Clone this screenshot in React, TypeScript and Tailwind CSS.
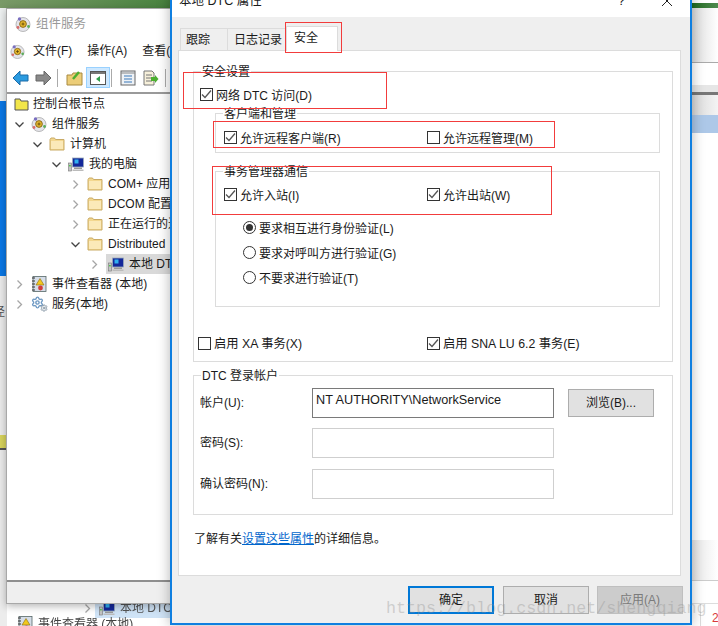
import type { ReactNode } from "react";
import { Settings } from "lucide-react";

const FONT = "font-['Liberation_Sans','Noto_Sans_CJK_SC',sans-serif]";

const Check = ({ on }: { on?: boolean }) => (
  <span className="flex h-[13px] w-[13px] shrink-0 items-center justify-center border border-[#333] bg-white">
    {on && (
      <svg width="11" height="11" viewBox="0 0 11 11" fill="none" stroke="#555" strokeWidth="1.3">
        <path d="M1 5.5 4 8.5 10 1.5" />
      </svg>
    )}
  </span>
);

const Radio = ({ on, text }: { on?: boolean; text: string }) => (
  <div className="flex h-[13px] items-center gap-[3px] whitespace-nowrap">
    <span className="flex h-[13px] w-[13px] shrink-0 items-center justify-center rounded-full border border-[#333] bg-white">
      {on && <span className="h-[7px] w-[7px] rounded-full bg-[#333]" />}
    </span>
    <span className="pt-[2px]">{text}</span>
  </div>
);

const CheckRow = ({ on, text }: { on?: boolean; text: string }) => (
  <div className="flex h-[13px] items-center gap-[3px] whitespace-nowrap">
    <Check on={on} />
    <span className="pt-[2px]">{text}</span>
  </div>
);

const Folder = () => (
  <svg width="16" height="14" viewBox="0 0 16 14" className="shrink-0">
    <path d="M1 13V2.5L2 1h3.5l1 1.5H15V13z" fill="#f3d78f" stroke="#c9ab66" strokeWidth="1" />
    <path d="M2 4h12v8H2z" fill="#fbe9b8" />
  </svg>
);

const Computer = () => (
  <svg width="16" height="15" viewBox="0 0 16 15" className="shrink-0">
    <rect x="0.5" y="6" width="3" height="8" fill="#c4c4c4" stroke="#777" strokeWidth="0.6" />
    <rect x="1.2" y="8" width="1.4" height="1.4" fill="#3c3" />
    <rect x="4.5" y="1" width="11" height="9" fill="#14289a" stroke="#9ab" strokeWidth="0.8" />
    <rect x="6.5" y="2.5" width="4" height="4" fill="#2fb0f0" />
    <rect x="6" y="10.5" width="8" height="1.5" fill="#999" />
    <rect x="4.5" y="12.5" width="11" height="1.5" fill="#bbb" />
  </svg>
);

const ComponentIcon = ({ size = 16 }: { size?: number }) => (
  <svg width={size} height={size} viewBox="0 0 16 16" className="shrink-0">
    <circle cx="8" cy="8.5" r="7" fill="#e4e4ea" stroke="#aaa" strokeWidth="0.8" />
    <circle cx="8" cy="8" r="3.4" fill="#e3b52c" stroke="#7a5a10" strokeWidth="0.8" />
    <path d="M6.5 8h3M8 6.5v3" stroke="#5a4208" strokeWidth="0.8" />
    <circle cx="4.5" cy="3" r="1.7" fill="#7a6fc0" />
    <circle cx="13.5" cy="10.5" r="1.4" fill="#5cae5c" />
    <circle cx="3" cy="11.5" r="1.4" fill="#d86a6a" />
  </svg>
);

const EventIcon = () => (
  <svg width="16" height="16" viewBox="0 0 16 16" className="shrink-0">
    <rect x="2" y="0.5" width="13" height="15" fill="#d5dde8" stroke="#566" strokeWidth="0.8" />
    <path d="M1 2h3M1 5h3M1 8h3M1 11h3M1 14h3" stroke="#333" strokeWidth="1" />
    <path d="M9 2.5 13 9H5z" fill="#f2c81e" stroke="#8a6a10" strokeWidth="0.6" />
    <circle cx="9.5" cy="12" r="2.4" fill="#d23c3c" />
  </svg>
);

const ServiceIcon = () => (
  <span className="relative h-4 w-4 shrink-0">
    <Settings size={13} color="#6f9ac4" strokeWidth={2.6} />
    <span className="absolute bottom-0 right-[-1px]">
      <Settings size={8} color="#8a9aa8" strokeWidth={3} />
    </span>
  </span>
);

const Chevron = ({ open }: { open?: boolean }) => (
  <svg width="9" height="9" viewBox="0 0 9 9" fill="none" strokeWidth="1.3" stroke={open ? "#444" : "#a6a6a6"} className="shrink-0">
    {open ? <path d="M0.5 2.5 4.5 6.5 8.5 2.5" /> : <path d="M2.5 0.5 6.5 4.5 2.5 8.5" />}
  </svg>
);

const Tree = ({ indent, open, icon, label, selected }: { indent: string; open?: boolean; icon: ReactNode; label: string; selected?: boolean }) => (
  <div className={`flex h-5 items-center whitespace-nowrap ${indent}`}>
    <Chevron open={open} />
    <span className={`ml-[7px] flex h-5 grow items-center ${selected ? "ml-[5px] bg-[#d9d9d9] pl-[2px]" : ""}`}>
      {icon}
      <span className="ml-[5px]">{label}</span>
    </span>
  </div>
);

const Group = ({ title, className, children }: { title: string; className: string; children?: ReactNode }) => (
  <div className={`relative border border-[#dcdcdc] ${className}`}>
    <span className="absolute left-[7px] top-[-8px] whitespace-nowrap bg-white px-[1px] leading-4">{title}</span>
    {children}
  </div>
);

const Btn = ({ text, className }: { text: string; className: string }) => (
  <div className={`flex h-[28px] w-[86px] shrink-0 items-center justify-center ${className}`}>{text}</div>
);

const Highlight = ({ className }: { className: string }) => (
  <div className={`pointer-events-none absolute z-30 border border-[#f23c3c] ${className}`} />
);

const AccountRow = ({ label, value, focus, className = "", children }: { label: string; value?: string; focus?: boolean; className?: string; children?: ReactNode }) => (
  <div className={`flex h-[30px] items-center ${className}`}>
    <span className="w-[112px] shrink-0 whitespace-nowrap">{label}</span>
    <div className={`h-[30px] w-[242px] shrink-0 whitespace-nowrap border pl-[3px] pt-[2px] text-[12.7px] leading-[18px] ${focus ? "border-[#7a7a7a]" : "border-[#cfcfcf]"}`}>{value}</div>
    {children}
  </div>
);

export default function App() {
  return (
    <div className={`relative h-[626px] w-[718px] overflow-hidden bg-white text-[12px] text-[#1a1a1a] ${FONT}`}>
      {/* desktop behind the windows */}
      <div className="absolute left-0 top-0 h-[8px] w-[200px] bg-gradient-to-r from-[#7a9a68] to-[#3f7f38]" />
      <div className="absolute left-0 top-[8px] h-[93px] w-[7px] bg-[#eef1f1]" />
      <div className="absolute left-0 top-[101px] h-[175px] w-[7px] bg-[#0a78e6]" />
      <div className="absolute left-0 top-[276px] h-[350px] w-[7px] bg-[#ececec]" />
      <span className="absolute left-[-7px] top-[303px] text-[#555]">径</span>
      <div className="absolute left-0 top-[435px] h-[13px] w-[7px] bg-[#d8d45c]" />
      <div className="absolute left-0 top-[448px] h-[2px] w-[7px] bg-[#555]" />

      <div className="absolute right-0 top-[3px] h-[5px] w-[26px] bg-gradient-to-r from-[#1f6b1f] to-[#4f8a4f]" />
      <div className="absolute right-0 top-[8px] h-[54px] w-[26px] bg-gradient-to-r from-[#dcdcdc] to-white" />
      <div className="absolute right-0 top-[62px] h-px w-[26px] bg-[#aaa]" />
      <div className="absolute right-0 top-[85px] h-[7px] w-[26px] bg-[#e6e6e6]" />
      <div className="absolute right-0 top-[92px] h-[3px] w-[26px] bg-[#777]" />
      <div className="absolute right-0 top-[95px] h-[20px] w-[26px] bg-gradient-to-r from-[#d8d8d8] to-[#f4f4f4]" />
      <div className="absolute right-0 top-[115px] h-[18px] w-[26px] bg-[#adc8e8]" />
      <div className="absolute right-0 top-[540px] h-[40px] w-[26px] bg-gradient-to-r from-[#e6e6e6] to-white" />
      <div className="absolute right-0 top-[580px] h-px w-[26px] bg-[#ccc]" />
      <div className="absolute right-0 top-[603px] h-px w-[26px] bg-[#ddd]" />
      <div className="absolute left-[700px] top-[603px] h-[23px] w-px bg-[#ddd]" />
      <span className="absolute left-[712px] top-[609px] text-[#d83a3a]">2</span>

      {/* tree rows of the window behind */}
      <div className="absolute left-[83px] top-[598px] flex h-[20px] items-center blur-[0.5px]">
        <Chevron />
        <div className="ml-[3px] flex h-[20px] w-[80px] items-center gap-[5px] whitespace-nowrap bg-[#cfe3f6] pl-[4px] text-[#555]">
          <Computer />
          <span>本地 DTC</span>
        </div>
      </div>
      <div className="absolute left-[17px] top-[615px] flex items-center gap-[5px] whitespace-nowrap text-[#444] blur-[0.4px]">
        <EventIcon />
        <span>事件查看器 (本地)</span>
      </div>

      {/* MMC window */}
      <div className="absolute left-[6px] top-[8px] flex h-[596px] w-[170px] flex-col overflow-hidden border border-[#a8a8a8] bg-white shadow-[0_2px_8px_rgba(0,0,0,0.3)]">
        <div className="flex h-[30px] shrink-0 items-center pl-[8px] text-[#9a9a9a]">
          <ComponentIcon />
          <span className="ml-[5px] text-[12.5px]">组件服务</span>
        </div>
        <div className="flex h-[24px] shrink-0 items-center whitespace-nowrap pl-[3px]">
          <ComponentIcon size={15} />
          <span className="ml-[8px]">文件(F)</span>
          <span className="ml-[15px]">操作(A)</span>
          <span className="ml-[15px]">查看(V)</span>
        </div>
        <div className="flex h-[31px] shrink-0 items-center border-b-2 border-[#9a9a9a] pl-[5px]">
          <svg width="17" height="16" viewBox="0 0 17 16" className="shrink-0"><path d="M1 8 8 1v4h8v6H8v4z" fill="#2b9be0" stroke="#1a6aa8" /></svg>
          <svg width="17" height="16" viewBox="0 0 17 16" className="ml-[6px] shrink-0"><path d="M16 8 9 1v4H1v6h8v4z" fill="#8a8a8a" stroke="#666" /></svg>
          <span className="ml-[5px] h-[18px] w-px bg-[#aaa]" />
          <svg width="17" height="16" viewBox="0 0 17 16" className="ml-[8px] shrink-0"><path d="M1 15V5h5l1-2h9v12z" fill="#eccd78" stroke="#a88a40" /><path d="M7 9 13 2" stroke="#4caf30" strokeWidth="2.5" /></svg>
          <span className="ml-[3px] flex h-[21px] w-[24px] items-center justify-center border border-[#99d1ff] bg-[#cde8ff]">
            <svg width="16" height="14" viewBox="0 0 16 14"><rect x="0.5" y="0.5" width="15" height="13" fill="#fff" stroke="#555" /><path d="M1 1h14v2H1z" fill="#777" /><path d="M10 5v6L6 8z" fill="#2e9e4a" /></svg>
          </span>
          <span className="ml-px h-[18px] w-px bg-[#aaa]" />
          <svg width="16" height="16" viewBox="0 0 16 16" fill="none" className="ml-[8px] shrink-0"><rect x="1" y="1" width="14" height="14" fill="#eef2f6" stroke="#666" /><path d="M1 3h14" stroke="#888" /><path d="M4 6h8M4 9h8M4 12h8" stroke="#3a78b8" /></svg>
          <svg width="16" height="16" viewBox="0 0 16 16" fill="none" className="ml-[7px] shrink-0"><path d="M1 1h8l2 2v12H1z" fill="#f7f0da" stroke="#777" /><path d="M3 5h6M3 8h6M3 11h6" stroke="#777" /><path d="M8 7h4V5l3.5 4-3.5 4v-2H8z" fill="#4caf30" /></svg>
          <span className="ml-[6px] h-[18px] w-px bg-[#aaa]" />
        </div>
        <div className="grow overflow-hidden">
          <div className="flex h-5 items-center pl-[7px]">
            <svg width="15" height="13" viewBox="0 0 15 13" className="shrink-0"><path d="M1 12V1h5l1 2h7v9z" fill="#f2e64a" stroke="#555" /></svg>
            <span className="ml-[4px]">控制台根节点</span>
          </div>
          <Tree indent="pl-[8px]" open icon={<ComponentIcon />} label="组件服务" />
          <Tree indent="pl-[26px]" open icon={<Folder />} label="计算机" />
          <Tree indent="pl-[45px]" open icon={<Computer />} label="我的电脑" />
          <Tree indent="pl-[64px]" icon={<Folder />} label="COM+ 应用程序" />
          <Tree indent="pl-[64px]" icon={<Folder />} label="DCOM 配置" />
          <Tree indent="pl-[64px]" icon={<Folder />} label="正在运行的进程" />
          <Tree indent="pl-[64px]" open icon={<Folder />} label="Distributed" />
          <Tree indent="pl-[83px]" selected icon={<Computer />} label="本地 DTC" />
          <Tree indent="pl-[8px]" icon={<EventIcon />} label="事件查看器 (本地)" />
          <Tree indent="pl-[8px]" icon={<ServiceIcon />} label="服务(本地)" />
        </div>
        <div className="h-[23px] shrink-0 border-t-2 border-[#8f8f8f] bg-[#efefef]" />
      </div>

      {/* properties dialog */}
      <div className="absolute left-[170px] top-[-17px] z-10 flex h-[642px] w-[522px] flex-col border-2 border-[#0f7fe0] bg-[#efefef] shadow-[0_0_12px_rgba(0,0,0,0.3)]">
        <div className="flex h-[32px] shrink-0 items-center bg-white pl-[7px] pr-[17px]">
          <span className="whitespace-nowrap text-[12.5px]">本地 DTC 属性</span>
          <span className="ml-auto text-[13px]">?</span>
          <svg width="12" height="12" viewBox="0 0 12 12" fill="none" stroke="#222" strokeWidth="1" className="ml-[36px]"><path d="M1 1l10 10M11 1 1 11" /></svg>
        </div>
        <div className="flex h-[33px] shrink-0 items-end pl-[8px]">
          <div className="flex h-[22px] w-[48px] items-center border border-b-0 border-[#dcdcdc] pl-[5px]">跟踪</div>
          <div className="flex h-[22px] w-[58px] items-center whitespace-nowrap border-r border-t border-[#dcdcdc] pl-[6px]">日志记录</div>
          <div className="relative z-10 mb-[-1px] flex h-[25px] w-[52px] items-center border border-b-0 border-[#dcdcdc] bg-white pb-[2px] pl-[7px]">安全</div>
        </div>
        <div className="ml-[6px] h-[526px] w-[503px] shrink-0 border border-[#dcdcdc] bg-white">
          <Group title="安全设置" className="ml-[14px] mt-[20px] h-[291px] w-[480px]">
            <div className="pl-[6px] pt-[16px]">
              <CheckRow on text="网络 DTC 访问(D)" />
            </div>
            <Group title="客户端和管理" className="ml-[21px] mt-[12px] h-[40px] w-[445px]">
              <div className="grid grid-cols-[203px_1fr] pl-[8px] pt-[17px]">
                <CheckRow on text="允许远程客户端(R)" />
                <CheckRow text="允许远程管理(M)" />
              </div>
            </Group>
            <Group title="事务管理器通信" className="ml-[21px] mt-[18px] h-[136px] w-[445px]">
              <div className="grid grid-cols-[203px_1fr] pl-[8px] pt-[16px]">
                <CheckRow on text="允许入站(I)" />
                <CheckRow on text="允许出站(W)" />
              </div>
              <div className="mt-5 flex flex-col gap-3 pl-[27px]">
                <Radio on text="要求相互进行身份验证(L)" />
                <Radio text="要求对呼叫方进行验证(G)" />
                <Radio text="不要求进行验证(T)" />
              </div>
            </Group>
            <div className="mt-[30px] grid grid-cols-[229px_1fr] pl-1 text-[12.3px]">
              <CheckRow text="启用 XA 事务(X)" />
              <CheckRow on text="启用 SNA LU 6.2 事务(E)" />
            </div>
          </Group>
          <Group title="DTC 登录帐户" className="ml-[14px] mt-[13px] h-[140px] w-[480px]">
            <div className="pl-[6px] pt-[12px]">
              <AccountRow label="帐户(U):" value="NT AUTHORITY\NetworkService" focus>
                <Btn text="浏览(B)..." className="ml-[14px] border border-[#adadad] bg-[#e1e1e1]" />
              </AccountRow>
              <AccountRow label="密码(S):" className="mt-[10px]" />
              <AccountRow label="确认密码(N):" className="mt-[11px]" />
            </div>
          </Group>
          <p className="ml-[15px] mt-[16px] whitespace-nowrap leading-4">
            了解有关<span className="text-[#0066cc] underline">设置这些属性</span>的详细信息。
          </p>
        </div>
        <div className="mt-[10px] flex justify-end pr-[7px]">
          <Btn text="确定" className="border-2 border-[#0078d7] bg-[#e1e1e1]" />
          <Btn text="取消" className="ml-[9px] border border-[#adadad] bg-[#e1e1e1]" />
          <Btn text="应用(A)" className="ml-2 border border-[#bfbfbf] bg-[#cccccc] text-[#7a7a7a]" />
        </div>
      </div>

      {/* annotations and watermark on top of the screenshot */}
      <Highlight className="left-[183px] top-[72px] h-[37px] w-[204px]" />
      <Highlight className="left-[213px] top-[121px] h-[27px] w-[342px]" />
      <Highlight className="left-[212px] top-[166px] h-[49px] w-[340px]" />
      <Highlight className="left-[285px] top-[22px] h-[31px] w-[57px]" />
      <span className="pointer-events-none absolute left-[386px] top-[596px] z-30 whitespace-nowrap font-['Liberation_Mono',monospace] text-[16.7px] text-[rgba(140,140,140,0.35)]">https://blog.csdn.net/shengqiang</span>
    </div>
  );
}
